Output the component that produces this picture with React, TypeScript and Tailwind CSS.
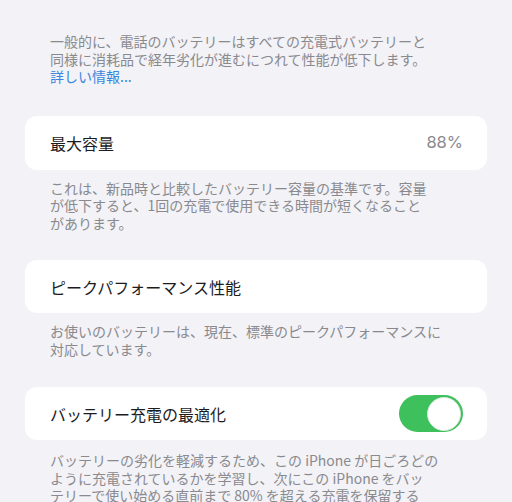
import React from 'react';

const font = { fontFamily: '"Noto Sans CJK JP", "Noto Sans", sans-serif' };

const Footer: React.FC<{ lines: React.ReactNode[]; className?: string }> = ({ lines, className = '' }) => (
  <div className={`pl-[50px] text-[14px] leading-[17.5px] text-[#8a8a8e] ${className}`}>
    {lines.map((line, i) => (
      <div key={i} className="whitespace-nowrap">{line}</div>
    ))}
  </div>
);

const Card: React.FC<{ title: string; children?: React.ReactNode; className?: string }> = ({ title, children, className = '' }) => (
  <div className={`mx-[25px] rounded-xl bg-white flex items-center justify-between pl-[25px] pr-[24px] ${className}`}>
    <span className="text-[16px] text-[#1c1c1e]">{title}</span>
    {children}
  </div>
);

const Toggle: React.FC = () => (
  <div className="w-[64px] h-[37px] rounded-full bg-[#3ec05c] flex items-center justify-end pr-[2px]">
    <div className="w-[34px] h-[34px] rounded-full bg-white border border-[#d8e8dc]" />
  </div>
);

export default function App() {
  return (
    <div className="w-[512px] h-[502px] overflow-hidden bg-[#f2f2f7] pt-[33px]" style={font}>
      <Footer
        lines={[
          '一般的に、電話のバッテリーはすべての充電式バッテリーと',
          '同様に消耗品で経年劣化が進むにつれて性能が低下します。',
          <span className="text-[#3a86dc]">詳しい情報...</span>,
        ]}
      />

      <Card title="最大容量" className="h-[54px] mt-[30px]">
        <span className="text-[16.5px] text-[#8a8a8e]" style={{ fontFamily: 'Inter, "Noto Sans", sans-serif' }}>88%</span>
      </Card>
      <Footer
        className="mt-[10px]"
        lines={[
          'これは、新品時と比較したバッテリー容量の基準です。容量',
          'が低下すると、1回の充電で使用できる時間が短くなること',
          'があります。',
        ]}
      />

      <Card title="ピークパフォーマンス性能" className="h-[53px] mt-[28px]" />
      <Footer
        className="mt-[10px]"
        lines={[
          'お使いのバッテリーは、現在、標準のピークパフォーマンスに',
          '対応しています。',
        ]}
      />

      <Card title="バッテリー充電の最適化" className="h-[53px] mt-[29px]">
        <Toggle />
      </Card>
      <Footer
        className="mt-[12px]"
        lines={[
          'バッテリーの劣化を軽減するため、この iPhone が日ごろどの',
          'ように充電されているかを学習し、次にこの iPhone をバッ',
          'テリーで使い始める直前まで 80% を超える充電を保留する',
        ]}
      />
    </div>
  );
}
